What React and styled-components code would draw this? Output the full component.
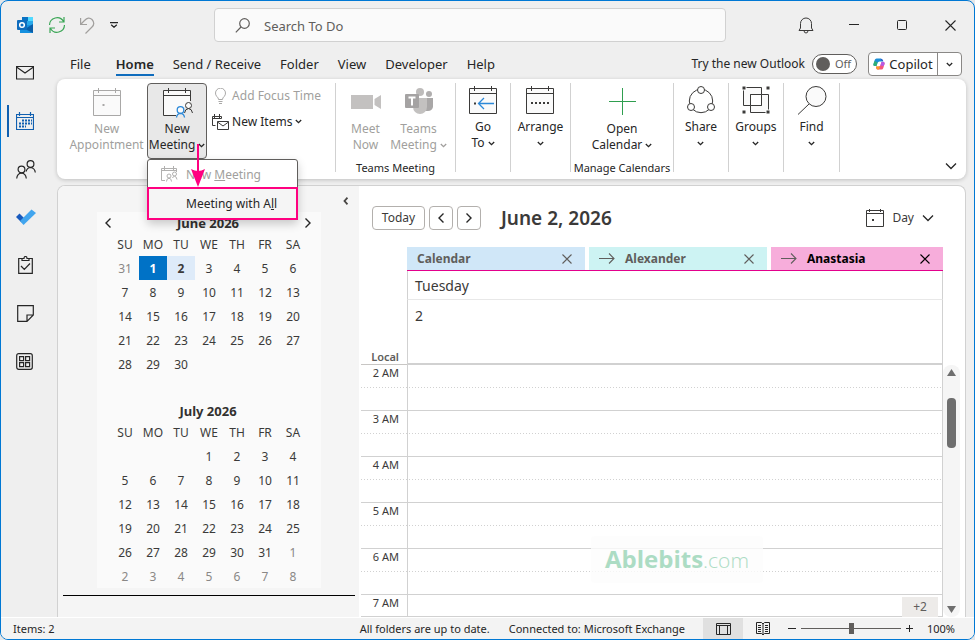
import React, { useState } from 'react';
import styled, { createGlobalStyle, css } from 'styled-components';

const GlobalStyle = createGlobalStyle`
  * { box-sizing: border-box; }
  body {
    margin: 0;
    background: #e4e6e8;
    color: #262626;
    font: 12px/16px 'Noto Sans', 'Open Sans', sans-serif;
  }
  button, input { font: inherit; color: inherit; }
  button { padding: 0; border: 0; background: none; }
  svg { display: block; flex: none; }
`;

/* ---------- icons ---------- */

const Svg = ({ w, h = w, stroke = '#3b3a39', children, ...rest }) => (
  <svg width={w} height={h} viewBox={`0 0 ${w} ${h}`} fill="none" stroke={stroke} aria-hidden="true" {...rest}>
    {children}
  </svg>
);

const Chevron = ({ big, left, right, stroke = '#262626' }) => {
  if (left || right) {
    return (
      <Svg w={8} h={12} stroke={stroke} strokeWidth="1.4">
        <path d={left ? 'M6.5 1.5 2 6l4.5 4.5' : 'M1.5 1.5 6 6l-4.5 4.5'} />
      </Svg>
    );
  }
  return big ? (
    <Svg w={12} h={8} stroke={stroke} strokeWidth="1.3"><path d="M1 1.5 6 6.5l5-5" /></Svg>
  ) : (
    <Svg w={7} h={5} stroke={stroke} strokeWidth="1.3"><path d="M.8 1 3.5 3.7 6.2 1" /></Svg>
  );
};

const CalFrame = ({ stroke = '#3b3a39', children }) => (
  <Svg w={30} h={30} stroke={stroke}>
    <path d="M1.5 2.5h27v25h-27z" fill="#fafafa" />
    <path d="M1.5 7.5h27M6.5 0v5M23.5 0v5" />
    {children}
  </Svg>
);

const AppointmentIcon = () => (
  <CalFrame stroke="#a9a8a7"><path d="M10.5 17h2" strokeWidth="2" /></CalFrame>
);

const MeetingIcon = () => (
  <Svg w={32} h={31}>
    <path d="M15 28.5H2.500V3.500h27V14" fill="#fafafa" />
    <path d="M2.500 8.500h27M7.500 1v5M24.500 1v5" />
    <circle cx="27.500" cy="18.500" r="3" fill="#fafafa" />
    <path d="M23.500 26q.5-4 4-4.500 3.500.5 4 4.500" />
    <g stroke="#2b88d8" strokeWidth="1.300">
      <circle cx="19.500" cy="23" r="3.300" fill="#fafafa" />
      <path d="M15.500 30.500q.5-4 4-4.200 3.500.2 4 4.200" />
    </g>
  </Svg>
);

const MeetingSmallIcon = () => (
  <Svg w={17} h={17} stroke="#b1b0af">
    <path d="M4 14.500H.5V2.500h15V6M.5 4.500h15M3.500 0v4M12.500 0v4" />
    <circle cx="8" cy="10" r="2" /><circle cx="13.500" cy="8" r="2" />
    <path d="M5.500 15.500q0-3 2.500-3.300 2.500.3 2.500 3.300M11.500 12q.5-1.500 2-1.800 2 .2 2.500 3.300" />
  </Svg>
);

const BulbIcon = () => (
  <Svg w={13} h={16} stroke="#a9a8a7">
    <path d="M4.500 11.500q0-1.700-1.700-3a5 5 0 1 1 7.400 0q-1.700 1.300-1.700 3zM4.500 13.500h4M5 15.500h3" />
  </Svg>
);

const NewItemsIcon = () => (
  <Svg w={17} h={16}>
    <path d="M3.500 11.500h-3v-9h9v2M.5 4.500h9M2.500 0v4M7.500 0v4" />
    <path d="M5.500 7.500h11v8h-11zM5.500 8l5.500 4 5.500-4" />
  </Svg>
);

const CameraIcon = () => (
  <Svg w={30} h={30} stroke="none">
    <path d="M0 7h22v14H0zM23.500 11 30 7v14l-6.500-4z" fill="#c3c1c0" />
  </Svg>
);

const TeamsIcon = () => (
  <Svg w={30} h={30} stroke="none">
    <circle cx="16" cy="4" r="4" fill="#bebcbb" />
    <circle cx="25" cy="6" r="3" fill="#b0aeae" />
    <path d="M22 10h7v9q-1 4-5 4h-3z" fill="#a9a7a7" />
    <path d="M9 10h14v9a7 7 0 0 1-14 0z" fill="#c3c1c0" />
    <rect x="1" y="6" width="14" height="14" rx="1" fill="#a5a3a3" />
    <path d="M4.500 9.500h7M8 9.500v8" stroke="#fff" strokeWidth="2" />
  </Svg>
);

const GoToIcon = () => (
  <CalFrame>
    <path d="M6 17.500h2" strokeWidth="2" />
    <path d="M26 17.500H10.500M16 12l-5.500 5.500L16 23" stroke="#2b88d8" strokeWidth="1.300" />
  </CalFrame>
);

const ArrangeIcon = () => (
  <CalFrame><path d="M6 17h18" strokeWidth="2" strokeDasharray="2 2" /></CalFrame>
);

const PlusIcon = () => <Svg w={28} h={30}><path d="M14.500 0v27M1 13.500h27" stroke="#2f9e4f" /></Svg>;

const ShareIcon = () => (
  <Svg w={30} h={30}>
    <circle cx="15" cy="15" r="11.700" />
    <g fill="#fff"><circle cx="15" cy="4" r="3.500" /><circle cx="5" cy="21" r="3.500" /><circle cx="25" cy="21" r="3.500" /></g>
  </Svg>
);

const GroupsIcon = () => (
  <Svg w={30} h={30}>
    <path d="M2.500 1.500h18v18h-18zM9.500 8.500h18v18h-18z" fill="#fafafa" />
    <path d="M9.500 8.500h11v11h-11z" fill="#fff" />
    <path d="M1 0h4v4H1zM25 0h4v4h-4zM1 24h4v4H1zM25 24h4v4h-4z" fill="#3b3a39" stroke="#fff" />
  </Svg>
);

const FindIcon = () => (
  <Svg w={30} h={30}><circle cx="19" cy="10.5" r="10" fill="#fafafa" /><path d="M12 18 1 28.500" /></Svg>
);

const OutlookIcon = () => (
  <Svg w={17} h={17} stroke="none">
    <path d="M5 0h11v8H5z" fill="#28a8ea" /><path d="M11 0h5v4h-5z" fill="#50d9ff" />
    <path d="M5 0h6v4H5z" fill="#0a73c4" />
    <path d="M3 8h13v8H3z" fill="#1490df" /><path d="m16 7-8 5 8 4z" fill="#0a5ea8" />
    <rect x="0" y="3" width="10" height="10" rx="1" fill="#0f6cbd" />
    <circle cx="5" cy="8" r="2.300" stroke="#fff" strokeWidth="1.500" />
  </Svg>
);

const CopilotIcon = () => (
  <Svg w={12} h={12} stroke="none">
    <path d="M3.500.5h4q1 0 1.400 1.500L9 3.500H6.500Q5 3.500 4.500 5L3.500 8H1.800Q0 8 .4 6.200L1.700 2Q2.200.5 3.500.5z" fill="#1b8fd8" />
    <path d="M1.500 3 .3 6.500Q.2 8 1.800 8h1.700L4.600 4.500z" fill="#35b55c" opacity=".8" />
    <path d="M7.500.5 9 3.500h1.500q-.8-3-3-3z" fill="#2253c9" />
    <path d="M8.500 11.500h-4q-1 0-1.400-1.500L3 8.500h2.500q1.500 0 2-1.500l1-3h1.700Q12 4 11.600 5.800l-1.300 4.200q-.5 1.500-1.800 1.500z" fill="#f5567b" />
    <path d="M8.500 4h1.700Q12 4 11.600 5.800L10.800 8 7.300 7.400z" fill="#b65be6" />
    <path d="M3 8.500h2.500q.8 0 1.500-.6L6 11.500H4.500q-1 0-1.500-3z" fill="#f8a023" />
  </Svg>
);

const RefreshIcon = () => (
  <Svg w={18} h={18} stroke="#3aa655" strokeWidth="1.200">
    <path d="M1.500 9A7.500 7.500 0 0 1 15.500 5.500M16.500 9A7.500 7.500 0 0 1 2.500 12.500M16 1v5h-5M2 17v-5h5" />
  </Svg>
);

const UndoIcon = () => (
  <Svg w={16} h={17} stroke="#a19f9d" strokeWidth="1.200">
    <path d="M.6 1v6.500H7M.6 7.500 4.500 3.500Q8.500-.8 12 2.500 15.500 6.500 12 10L5.500 16.500" />
  </Svg>
);

const QuickMenuIcon = () => (
  <Svg w={8} h={6} stroke="#262626" strokeWidth="1.200"><path d="M0 .7h8M1.200 2.700 4 5.300l2.800-2.600" /></Svg>
);

const SearchIcon = () => (
  <Svg w={15} h={15} stroke="#605e5c" strokeWidth="1.200"><circle cx="9.500" cy="5.500" r="4.800" /><path d="M6 9 .8 14.300" /></Svg>
);

const BellIcon = () => (
  <Svg w={16} h={17}>
    <path d="M1 13.500h14L13.500 11V6.500a5.500 5.500 0 0 0-11 0V11zM6 13.500q0 2.500 2 2.500t2-2.500" />
  </Svg>
);

const MailIcon = () => <Svg w={18} h={14}><path d="M.5.500h17v12.500H.5zM.5 1 9 7l8.500-6" stroke="#262626" strokeWidth="1.200" /></Svg>;

const CalendarIcon = () => (
  <Svg w={18} h={19} stroke="#1160b0">
    <path d="M.5 2.500h17v15H.5zM.5 5.500h17M3.500 0v4M14.500 0v4" strokeWidth="1.200" />
    <path d="M6 8.500h10M3 11.500h13M3 14.500h7" strokeWidth="2" strokeDasharray="2 1" />
  </Svg>
);

const PeopleIcon = () => (
  <Svg w={20} h={19} stroke="#262626" strokeWidth="1.200">
    <circle cx="5.500" cy="9.500" r="3.400" /><path d="M.7 18.500q.5-5 4.800-5.500 4.300.5 4.800 5.500" />
    <circle cx="14.500" cy="4" r="3.400" /><path d="M10 11.500q1-3.600 4.500-4 4.300.5 4.800 5" />
  </Svg>
);

const TodoIcon = () => (
  <Svg w={20} h={17} stroke="none">
    <path d="m0 8 3.500-3.500L9 10l-3.500 3.500z" fill="#185abd" />
    <path d="M4 12 15.500.500 20 4 7.500 16z" fill="#41a5ee" />
  </Svg>
);

const TasksIcon = () => (
  <Svg w={18} h={18} stroke="#262626" strokeWidth="1.200">
    <path d="M6 2.500H2.700v14.800h13.600V2.500H13M6 4.500v-2h2q0-2 1.500-2T11 2.500h2v2zM5 10l3.300 3.500L14 7.500" />
  </Svg>
);

const NotesIcon = () => (
  <Svg w={18} h={17} stroke="#262626" strokeWidth="1.200"><path d="M1.700.700h15.600v9.300L11 16.300H1.700zM11 16V10h6" /></Svg>
);

const AppsIcon = () => (
  <Svg w={17} h={17} stroke="#262626" strokeWidth="1.200">
    <rect x=".7" y=".7" width="15.600" height="15.600" rx="2" />
    <path d="M3.600 3.600h4v4h-4zM9.600 3.600h4v4h-4zM3.600 9.600h4v4h-4zM9.600 9.600h4v4h-4z" />
  </Svg>
);

const DayIcon = () => (
  <Svg w={18} h={18}>
    <path d="M.5 1.500h17v16H.5zM.5 4.500h17M3.500 0v3M14.500 0v3" /><path d="M6 11h2" strokeWidth="2" />
  </Svg>
);

const CrossIcon = ({ stroke = '#605e5c', size = 10 }) => (
  <Svg w={size} stroke={stroke} strokeWidth="1.100"><path d={`M.5.500l${size - 1} ${size - 1}M${size - 0.5}.500l-${size - 1} ${size - 1}`} /></Svg>
);

const ArrowIcon = ({ stroke = '#605e5c' }) => (
  <Svg w={16} h={12} stroke={stroke} strokeWidth="1.100"><path d="M0 5.500h15M10 .5l5 5-5 5" /></Svg>
);

const NormalViewIcon = () => (
  <Svg w={15} h={12} stroke="#262626"><path d="M.5.500h14v11H.5zM.5 2.500h14M3.500 2.500v9M11.500 2.500v9" /></Svg>
);

const ReadingViewIcon = () => (
  <Svg w={14} h={13} stroke="#262626">
    <path d="M.5.500h5L7 2 8.500.500h5v11h-5L7 13l-1.500-1.500h-5zM7 2v11M2 3.500h3M2 5.500h3M2 7.500h3M2 9.500h3M9 3.500h3M9 5.500h3M9 7.500h3M9 9.500h3" />
  </Svg>
);

/* ---------- window ---------- */

const Window = styled.div`
  display: flex;
  flex-direction: column;
  height: 100vh;
  min-height: 480px;
  border: 1px solid #0078d4;
  border-radius: 8px;
  background: #efefef;
  overflow: hidden;
`;

const TitleBar = styled.header`
  display: flex;
  align-items: center;
  height: 48px;
`;

const QuickAccess = styled.div`
  display: flex;
  align-items: center;
  gap: 14px;
  width: 213px;
  padding-left: 16px;
`;

const IconButton = styled.button`
  display: flex;
  align-items: center;
  justify-content: center;
`;

const SearchBox = styled.label`
  display: flex;
  flex: 1;
  align-items: center;
  gap: 12px;
  height: 34px;
  margin-right: 56px;
  padding-left: 20px;
  border: 1px solid #d1d1d1;
  border-radius: 4px;
  background: #fafafa;
`;

const SearchInput = styled.input`
  flex: 1;
  min-width: 0;
  padding: 3px 2px 1px;
  border: 0;
  outline: 0;
  background: none;
  font-size: 13px;
  &::placeholder { color: #605e5c; opacity: 1; }
`;

const WindowButton = styled(IconButton)`
  width: 48px;
  height: 48px;
`;

const Workspace = styled.div`
  display: flex;
  flex: 1;
  min-height: 0;
`;

const Rail = styled.nav`
  display: flex;
  flex-direction: column;
  width: 56px;
`;

const RailButton = styled.button`
  display: flex;
  align-items: center;
  height: 48px;
  padding-left: 15px;
  ${p => p.$active && css`
    padding-left: 6px;
    &::before {
      content: '';
      width: 2px;
      height: 32px;
      margin-right: 7px;
      background: #0f5fb0;
    }
  `}
`;

const Main = styled.div`
  display: flex;
  flex: 1;
  flex-direction: column;
  min-width: 0;
  padding-right: 8px;
`;

/* ---------- ribbon ---------- */

const TabBar = styled.div`
  display: flex;
  align-items: center;
  height: 30px;
  padding-left: 13px;
`;

const Tabs = styled.div`
  display: flex;
  gap: 19px;
  margin-right: auto;
`;

const Tab = styled.button`
  height: 24px;
  padding-top: 2px;
  border-bottom: 2px solid transparent;
  font-size: 13px;
  white-space: nowrap;
  &:first-child { margin-right: 6px; }
  ${p => p.$active && css`
    border-color: #0f6cbd;
    font-weight: 600;
  `}
`;

const TryLabel = styled.label`
  display: flex;
  align-items: center;
  gap: 7px;
  white-space: nowrap;
`;

const Switch = styled.span`
  display: flex;
  align-items: center;
  gap: 5px;
  width: 45px;
  height: 20px;
  padding-left: 1px;
  border: 1px solid #605e5c;
  border-radius: 10px;
  background: #fff;
  color: #605e5c;
  font-size: 11px;
`;

const SwitchInput = styled.input`
  appearance: none;
  width: 14px;
  height: 14px;
  margin: 0 0 0 2px;
  border-radius: 7px;
  background: #605e5c;
`;

const Copilot = styled.div`
  display: flex;
  height: 24px;
  margin-left: 11px;
  margin-right: 4px;
  border: 1px solid #8a8886;
  border-radius: 4px;
  background: #fff;
  font-size: 13px;
  button + button { border-left: 1px solid #8a8886; }
`;

const CopilotButton = styled(IconButton)`
  width: ${p => (p.$menu ? '24px' : '68px')};
  gap: 4px;
`;

const Ribbon = styled.section`
  display: flex;
  height: 100px;
  padding: 4px 0 7px;
  border-radius: 8px;
  background: #fff;
  box-shadow: 0 1px 4px rgba(0, 0, 0, 0.2);
`;

const Group = styled.div`
  display: flex;
  flex-direction: column;
  align-items: center;
  width: ${p => p.$width}px;
  border-right: 1px solid #d1d1d1;
`;

const GroupBody = styled.div`
  display: flex;
  flex: 1;
  align-items: flex-start;
`;

const GroupLabel = styled.div`
  font-size: 11px;
  line-height: 8px;
  white-space: nowrap;
`;

const Tool = styled.button`
  display: flex;
  flex-direction: column;
  align-items: center;
  gap: 3px;
  width: ${p => (p.$width ? `${p.$width}px` : 'auto')};
  padding-top: ${p => (p.$tight ? '3px' : '5px')};
  color: ${p => (p.disabled ? '#a19f9d' : '#262626')};
  white-space: nowrap;
`;

const ToolText = styled.span`
  display: flex;
  flex-direction: column;
  align-items: center;
`;

const ToolLine = styled.span`
  display: flex;
  align-items: center;
  gap: 3px;
  height: 16px;
`;

const MeetingSlot = styled.div`
  position: relative;
  margin: 0 5px;
  ${Tool} {
    width: 60px;
    height: 76px;
    padding-top: 3px;
    border: 1px solid #605e5c;
    border-radius: 4px;
    background: #e8e8e8;
  }
`;

const Menu = styled.div`
  position: absolute;
  z-index: 2;
  top: 76px;
  left: 0;
  width: 151px;
  border: 1px solid #605e5c;
  border-radius: 3px;
  background: #fff;
  box-shadow: 0 4px 10px rgba(0, 0, 0, 0.2);
`;

const MenuItem = styled.button`
  display: flex;
  align-items: center;
  gap: 8px;
  width: 100%;
  height: 27px;
  padding: 2px 0 0 13px;
  color: #a19f9d;
  ${p => p.$marked && css`
    width: 151px;
    height: 33px;
    margin: 0 -1px -1px;
    padding: 0 0 0 37px;
    border: 2px solid #ff0080;
    background: #f5f5f5;
    color: #262626;
  `}
`;

const Pointer = styled.svg`
  position: absolute;
  z-index: 3;
  top: 61px;
  left: 44px;
`;

const SideTools = styled.div`
  display: flex;
  flex-direction: column;
  gap: 9px;
  padding-top: 4px;
`;

const SideTool = styled.button`
  display: flex;
  align-items: center;
  gap: 3px;
  height: 17px;
  color: ${p => (p.disabled ? '#a19f9d' : '#262626')};
  white-space: nowrap;
`;

const SideIcon = styled.span`
  display: flex;
  justify-content: center;
  width: 17px;
`;

const RibbonToggle = styled.button`
  align-self: flex-end;
  margin: 0 9px 2px auto;
`;

/* ---------- panels ---------- */

const Panels = styled.main`
  display: flex;
  flex: 1;
  min-height: 0;
  margin-top: 6px;
  border: 1px solid #d1d1d1;
  border-bottom: 0;
  border-radius: 8px 8px 0 0;
  background: #fff;
  overflow: hidden;
`;

const Navigator = styled.aside`
  display: flex;
  flex-direction: column;
  width: 301px;
  padding: 9px 4px 0 5px;
  background: #f5f5f5;
`;

const Collapse = styled.button`
  align-self: flex-end;
  height: 12px;
  margin-right: 7px;
`;

const MiniCalendars = styled.div`
  width: 224px;
  margin: 5px 0 7px 34px;
  padding: 0 7px;
  background: #fafafa;
`;

const NavLine = styled.div`
  border-top: 1px solid #000;
`;

const MonthHead = styled.div`
  display: flex;
  align-items: center;
  justify-content: space-between;
  height: 20px;
  padding: 1px 2px 0 0;
  color: #323130;
  font-size: 13px;
  font-weight: 700;
`;

const MonthTitle = styled.span`
  flex: 1;
  text-align: center;
`;

const MonthTable = styled.table`
  margin: 0 7px;
  border-spacing: 0;
  & + ${MonthHead} { margin-top: 24px; }
  th, td { width: 28px; height: 24px; padding: 0; text-align: center; font-weight: 400; }
  th { padding-top: 1px; color: #3b3a39; }
`;

const DayButton = styled.button`
  display: block;
  width: 28px;
  height: 24px;
  padding-top: 1px;
  color: ${p => (p.$other ? '#8a8886' : '#3b3a39')};
  ${p => p.$today && css`background: #0072c6; color: #fff; font-weight: 700;`}
  ${p => p.$selected && css`background: #deebf9; font-weight: 700;`}
`;

const Schedule = styled.section`
  display: flex;
  flex: 1;
  flex-direction: column;
  min-width: 0;
`;

const ScheduleBar = styled.div`
  display: flex;
  align-items: center;
  gap: 4px;
  height: 61px;
  padding: 3px 31px 0 13px;
  color: #3b3a39;
`;

const BarButton = styled(IconButton)`
  width: ${p => (p.$wide ? '53px' : '24px')};
  height: 24px;
  border: 1px solid #b3b0ad;
  border-radius: 4px;
`;

const DateTitle = styled.h1`
  margin: 0 auto 0 16px;
  font-size: 19px;
  line-height: 24px;
  font-weight: 600;
`;

const ViewButton = styled.button`
  display: flex;
  align-items: center;
  gap: 8px;
`;

const ScheduleBody = styled.div`
  display: flex;
  flex: 1;
  flex-direction: column;
  position: relative;
  min-height: 0;
  padding-left: 2px;
`;

const HeadRow = styled.div`
  display: grid;
  grid-template-columns: 46px 1fr;
  margin-right: 22px;
`;

const LocalLabel = styled.div`
  display: flex;
  align-items: flex-end;
  justify-content: flex-end;
  padding-right: 8px;
  border-bottom: 1px solid #c8c6c4;
  color: #605e5c;
  font-size: 11px;
  line-height: 14px;
  font-weight: 600;
`;

const CalendarTabs = styled.div`
  display: grid;
  grid-template-columns: 178px 178px 1fr;
  gap: 4px;
  border-bottom: 1px solid #e3008c;
`;

const CalendarTab = styled.div`
  display: flex;
  align-items: center;
  gap: 10px;
  height: 23px;
  padding: 0 13px 0 10px;
  background: ${p => p.$color};
  color: ${p => p.$ink || '#605e5c'};
  font-weight: 700;
`;

const CalendarName = styled.span`
  flex: 1;
`;

const DayCell = styled.div`
  height: ${p => p.$height}px;
  padding: ${p => p.$pad}px 7px 0;
  border: solid #d1d1d1;
  border-width: 0 1px;
  border-bottom: ${p => p.$line};
  color: #3b3a39;
  font-size: 14px;
  line-height: 18px;
`;

const Timeline = styled.div`
  display: flex;
  flex: 1;
  min-height: 0;
`;

const Hours = styled.div`
  flex: 1;
  min-width: 0;
  overflow: hidden;
  border-bottom: 1px solid #d1d1d1;
`;

const Hour = styled.div`
  display: grid;
  grid-template-columns: 46px 1fr;
  height: 46px;
  border-bottom: 1px solid #d1d1d1;
  background: linear-gradient(90deg, #d1d1d1 1px, transparent 1px) 0 22px / 3px 1px repeat-x;
`;

const HourLabel = styled.div`
  padding-right: 8px;
  color: #3b3a39;
  font-size: 11px;
  text-align: right;
`;

const HourSlot = styled.div`
  border: solid #d1d1d1;
  border-width: 0 1px;
`;

const ScrollBar = styled.div`
  display: flex;
  flex-direction: column;
  align-items: center;
  justify-content: space-between;
  width: 17px;
  margin-right: 5px;
  padding: 4px 0;
  border-radius: 8px;
  background: #f5f5f5;
`;

const ScrollThumb = styled.div`
  width: 9px;
  height: 50px;
  margin: 22px 0 auto;
  border-radius: 4px;
  background: #6e6e6e;
`;

const Watermark = styled.div`
  position: absolute;
  bottom: 34px;
  left: 232px;
  padding: 0 14px;
  border-radius: 4px;
  background: rgba(252, 252, 252, 0.8);
  color: #acdcc4;
  font: 300 21px/46px 'Open Sans', sans-serif;
  b { font-size: 24px; font-weight: 700; }
`;

const MoreBadge = styled.button`
  position: absolute;
  right: 27px;
  bottom: 0;
  width: 36px;
  height: 20px;
  background: #edebe9;
  color: #605e5c;
  font-size: 12px;
`;

/* ---------- status bar ---------- */

const StatusBar = styled.footer`
  display: flex;
  align-items: center;
  height: 22px;
  padding: 0 19px 0 12px;
  border-top: 1px solid #fff;
  background: #f3f3f3;
  font-size: 11px;
`;

const StatusText = styled.span`
  margin-right: ${p => p.$gap || '0'};
  line-height: 14px;
  white-space: nowrap;
`;

const StatusButton = styled(IconButton)`
  width: 40px;
  height: 100%;
  background: ${p => (p.$active ? '#e0e0e0' : 'none')};
`;

const ZoomButton = styled(IconButton)`
  width: 18px;
  height: 16px;
`;

const Zoom = styled.input`
  appearance: none;
  width: 100px;
  height: 12px;
  margin: 0;
  background: linear-gradient(#605e5c, #605e5c) center / 100% 1px no-repeat;
  &::-webkit-slider-thumb {
    appearance: none;
    width: 5px;
    height: 11px;
    background: #605e5c;
  }
`;

const ZoomLevel = styled.output`
  width: 36px;
  text-align: right;
`;

/* ---------- data ---------- */

const TABS = ['File', 'Home', 'Send / Receive', 'Folder', 'View', 'Developer', 'Help'];

const RAIL = [
  ['Mail', MailIcon], ['Calendar', CalendarIcon], ['People', PeopleIcon], ['To Do', TodoIcon],
  ['Tasks', TasksIcon], ['Notes', NotesIcon], ['Apps', AppsIcon],
];

const WEEKDAYS = ['SU', 'MO', 'TU', 'WE', 'TH', 'FR', 'SA'];

const HOURS = ['2 AM', '3 AM', '4 AM', '5 AM', '6 AM', '7 AM'];

// rows of { day, other }, starting on Sunday; null leaves a cell empty
function monthRows(before, length, after) {
  const cells = [
    ...before,
    ...Array.from({ length }, (_, i) => ({ day: i + 1 })),
    ...Array.from({ length: after }, (_, i) => ({ day: i + 1, other: true })),
  ];
  const rows = [];
  for (let i = 0; i < cells.length; i += 7) rows.push(cells.slice(i, i + 7));
  return rows;
}

const JUNE = monthRows([{ day: 31, other: true }], 30, 0);
const JULY = monthRows([null, null, null], 31, 8);

function Month({ rows, today, selected }) {
  return (
    <MonthTable>
      <thead>
        <tr>{WEEKDAYS.map(d => <th key={d}>{d}</th>)}</tr>
      </thead>
      <tbody>
        {rows.map((row, i) => (
          <tr key={i}>
            {row.map((c, j) => (
              <td key={j}>
                {c && (
                  <DayButton $other={c.other} $today={!c.other && c.day === today} $selected={!c.other && c.day === selected}>
                    {c.day}
                  </DayButton>
                )}
              </td>
            ))}
          </tr>
        ))}
      </tbody>
    </MonthTable>
  );
}

function RibbonTool({ icon, lines, menu, ...rest }) {
  return (
    <Tool {...rest}>
      {icon}
      <ToolText>
        {lines.map((line, i) => (
          <ToolLine key={i}>
            {line}
            {menu && i === lines.length - 1 && <Chevron stroke="currentColor" />}
          </ToolLine>
        ))}
      </ToolText>
    </Tool>
  );
}

export default function App() {
  const [tab, setTab] = useState('Home');
  const [zoom, setZoom] = useState(50);

  return (
    <>
      <GlobalStyle />
      <Window>
        <TitleBar>
          <QuickAccess>
            <OutlookIcon />
            <IconButton aria-label="Send and receive"><RefreshIcon /></IconButton>
            <IconButton aria-label="Undo"><UndoIcon /></IconButton>
            <IconButton aria-label="Customize toolbar"><QuickMenuIcon /></IconButton>
          </QuickAccess>
          <SearchBox>
            <SearchIcon />
            <SearchInput type="text" placeholder="Search To Do" aria-label="Search To Do" />
          </SearchBox>
          <WindowButton aria-label="Notifications"><BellIcon /></WindowButton>
          <WindowButton aria-label="Minimize"><Svg w={10} h={2} stroke="#262626"><path d="M0 .5h10" /></Svg></WindowButton>
          <WindowButton aria-label="Maximize">
            <Svg w={10} stroke="#262626"><rect x=".5" y=".5" width="9" height="9" rx="1" /></Svg>
          </WindowButton>
          <WindowButton aria-label="Close"><CrossIcon stroke="#262626" size={11} /></WindowButton>
        </TitleBar>

        <Workspace>
          <Rail>
            {RAIL.map(([name, Icon]) => (
              <RailButton key={name} aria-label={name} $active={name === 'Calendar'}><Icon /></RailButton>
            ))}
          </Rail>

          <Main>
            <TabBar>
              <Tabs>
                {TABS.map(t => <Tab key={t} $active={t === tab} onClick={() => setTab(t)}>{t}</Tab>)}
              </Tabs>
              <TryLabel>
                Try the new Outlook
                <Switch><SwitchInput type="checkbox" />Off</Switch>
              </TryLabel>
              <Copilot>
                <CopilotButton><CopilotIcon />Copilot</CopilotButton>
                <CopilotButton $menu aria-label="Copilot options"><Chevron /></CopilotButton>
              </Copilot>
            </TabBar>

            <Ribbon>
              <Group $width={279}>
                <GroupBody>
                  <RibbonTool disabled icon={<AppointmentIcon />} lines={['New', 'Appointment']} $width={71} />
                  <MeetingSlot>
                    <RibbonTool icon={<MeetingIcon />} lines={['New', 'Meeting']} menu />
                    <Menu>
                      <MenuItem disabled><MeetingSmallIcon /><span>New <u>M</u>eeting</span></MenuItem>
                      <MenuItem $marked><span>Meeting with A<u>l</u>l</span></MenuItem>
                    </Menu>
                    <Pointer width="14" height="43" viewBox="0 0 14 43" fill="#ff0080" aria-hidden="true">
                      <path d="M6 0h2v28h-2zM0 25q7 4 14 0L7 43z" />
                    </Pointer>
                  </MeetingSlot>
                  <SideTools>
                    <SideTool disabled><SideIcon><BulbIcon /></SideIcon>Add Focus Time</SideTool>
                    <SideTool><SideIcon><NewItemsIcon /></SideIcon>New Items <Chevron /></SideTool>
                  </SideTools>
                </GroupBody>
              </Group>
              <Group $width={120}>
                <GroupBody>
                  <RibbonTool disabled icon={<CameraIcon />} lines={['Meet', 'Now']} $width={46} />
                  <RibbonTool disabled icon={<TeamsIcon />} lines={['Teams', 'Meeting']} menu $width={60} />
                </GroupBody>
                <GroupLabel>Teams Meeting</GroupLabel>
              </Group>
              <Group $width={55}><RibbonTool $tight icon={<GoToIcon />} lines={['Go', 'To']} menu /></Group>
              <Group $width={60}><RibbonTool $tight icon={<ArrangeIcon />} lines={['Arrange', '']} menu /></Group>
              <Group $width={103}>
                <GroupBody><RibbonTool icon={<PlusIcon />} lines={['Open', 'Calendar']} menu /></GroupBody>
                <GroupLabel>Manage Calendars</GroupLabel>
              </Group>
              <Group $width={55}><RibbonTool $tight icon={<ShareIcon />} lines={['Share', '']} menu /></Group>
              <Group $width={55}><RibbonTool $tight icon={<GroupsIcon />} lines={['Groups', '']} menu /></Group>
              <Group $width={56}><RibbonTool $tight icon={<FindIcon />} lines={['Find', '']} menu /></Group>
              <RibbonToggle aria-label="Collapse ribbon"><Chevron big /></RibbonToggle>
            </Ribbon>

            <Panels>
              <Navigator>
                <Collapse aria-label="Collapse pane">
                  <Svg w={5} h={8} stroke="#484644" strokeWidth="1.800"><path d="M4.500.700 1.500 4l3 3.300" /></Svg>
                </Collapse>
                <MiniCalendars>
                  <MonthHead>
                    <IconButton aria-label="Previous month"><Chevron left /></IconButton>
                    <MonthTitle>June 2026</MonthTitle>
                    <IconButton aria-label="Next month"><Chevron right /></IconButton>
                  </MonthHead>
                  <Month rows={JUNE} today={1} selected={2} />
                  <MonthHead><MonthTitle>July 2026</MonthTitle></MonthHead>
                  <Month rows={JULY} />
                </MiniCalendars>
                <NavLine />
              </Navigator>

              <Schedule>
                <ScheduleBar>
                  <BarButton $wide>Today</BarButton>
                  <BarButton aria-label="Previous day"><Chevron left /></BarButton>
                  <BarButton aria-label="Next day"><Chevron right /></BarButton>
                  <DateTitle>June 2, 2026</DateTitle>
                  <ViewButton><DayIcon />Day <Chevron big /></ViewButton>
                </ScheduleBar>
                <ScheduleBody>
                  <HeadRow>
                    <LocalLabel>Local</LocalLabel>
                    <div>
                      <CalendarTabs>
                        <CalendarTab $color="#d0e7f8"><CalendarName>Calendar</CalendarName><IconButton aria-label="Close Calendar"><CrossIcon /></IconButton></CalendarTab>
                        <CalendarTab $color="#cdf3f3"><ArrowIcon /><CalendarName>Alexander</CalendarName><IconButton aria-label="Close Alexander"><CrossIcon /></IconButton></CalendarTab>
                        <CalendarTab $color="#f7addb" $ink="#000"><ArrowIcon /><CalendarName>Anastasia</CalendarName><IconButton aria-label="Close Anastasia"><CrossIcon stroke="#000" /></IconButton></CalendarTab>
                      </CalendarTabs>
                      <DayCell $height={29} $pad={6} $line="1px solid #e8e8e8">Tuesday</DayCell>
                      <DayCell $height={65} $pad={7} $line="2px solid #d1d1d1">2</DayCell>
                    </div>
                  </HeadRow>
                  <Timeline>
                    <Hours>
                      {HOURS.map(h => <Hour key={h}><HourLabel>{h}</HourLabel><HourSlot /></Hour>)}
                    </Hours>
                    <ScrollBar>
                      <Svg w={9} h={7} stroke="none"><path d="M4.500 0 9 7H0z" fill="#6e6e6e" /></Svg>
                      <ScrollThumb />
                      <Svg w={9} h={7} stroke="none"><path d="M0 0h9L4.500 7z" fill="#6e6e6e" /></Svg>
                    </ScrollBar>
                  </Timeline>
                  <Watermark><b>Ablebits</b>.com</Watermark>
                  <MoreBadge>+2</MoreBadge>
                </ScheduleBody>
              </Schedule>
            </Panels>
          </Main>
        </Workspace>

        <StatusBar>
          <StatusText $gap="auto">Items: 2</StatusText>
          <StatusText $gap="19px">All folders are up to date.</StatusText>
          <StatusText $gap="18px">Connected to: Microsoft Exchange</StatusText>
          <StatusButton $active aria-label="Normal view"><NormalViewIcon /></StatusButton>
          <StatusButton aria-label="Reading view"><ReadingViewIcon /></StatusButton>
          <ZoomButton aria-label="Zoom out"><Svg w={8} stroke="#262626"><path d="M0 3.500h8" /></Svg></ZoomButton>
          <Zoom type="range" min="0" max="100" value={zoom} onChange={e => setZoom(e.target.value)} aria-label="Zoom" />
          <ZoomButton aria-label="Zoom in"><Svg w={8} stroke="#262626"><path d="M0 3.500h7M3.500 0v7" /></Svg></ZoomButton>
          <ZoomLevel>100%</ZoomLevel>
        </StatusBar>
      </Window>
    </>
  );
}
